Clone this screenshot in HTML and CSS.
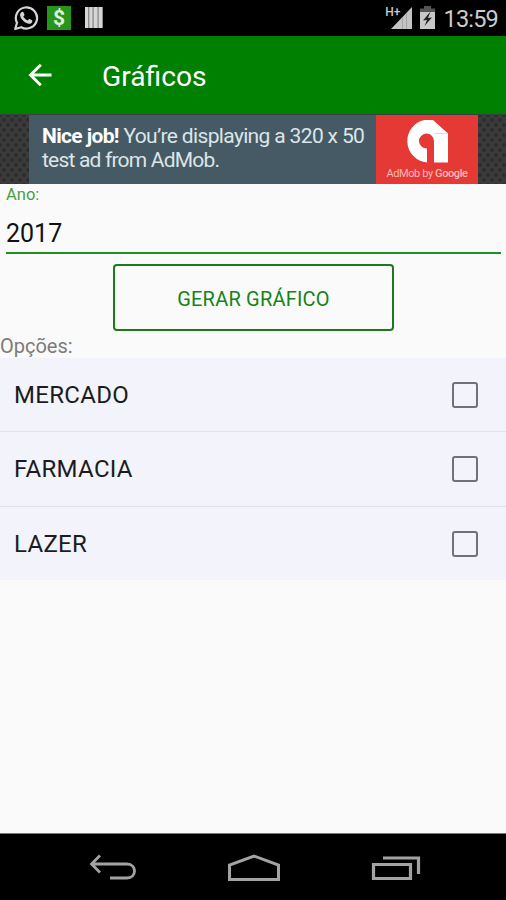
FILE: index.html
```
<!DOCTYPE html>
<html lang="pt-BR">
<head>
    <meta charset="UTF-8">
    <title>Gráficos</title>
    <link rel="stylesheet" href="styles.css">
</head>
<body>
    <div class="screen">
        <div class="status-bar">
            <svg class="icon-whatsapp" width="26" height="26" viewBox="0 0 26 26">
                <path d="M2.2 24 L4 17.8 A10.6 10.6 0 1 1 8.2 22.2 Z" fill="none" stroke="#d4d4d4" stroke-width="2.2" stroke-linejoin="round"/>
                <path d="M8.6 7 C9.4 6.6 10.2 6.6 10.5 7.3 L11.5 9.7 C11.6 10.4 10.7 11 10.3 11.6 C11.3 13.4 12.7 14.7 14.7 15.5 C15.4 15 15.9 13.8 16.7 14.1 L19 15.3 C19.7 15.8 19.2 17.5 18.3 18.2 C15.8 19.8 12.4 18 10.2 15.8 C7.6 13.3 5.5 9.2 8.6 7 Z" fill="#d4d4d4"/>
            </svg>
            <span class="icon-money">$</span>
            <svg class="icon-bars" width="18" height="21" viewBox="0 0 18 21">
                <path d="M0 0H18V21H0Z" fill="#8c8c8c"/>
                <path d="M0 0H3V21H0Z M4.4 0H7.4V21H4.4Z M8.8 0H12.4V21H8.8Z M13.8 0H17V21H13.8Z" fill="#d6d6d6"/>
            </svg>
            <span class="network">H+</span>
            <svg class="icon-signal" width="21" height="22" viewBox="0 0 21 22">
                <path d="M21 0V22H0Z" fill="#c4c4c4"/>
                <path d="M11.5 10V22 M15.5 6V22" stroke="#a4a4a4" stroke-width="1"/>
            </svg>
            <svg class="icon-battery" width="15" height="23" viewBox="0 0 15 23">
                <path d="M4 0H11V2.5H15V7H0V2.5H4Z" fill="#555"/>
                <path d="M0 6H15V23H0Z" fill="#c8c8c8"/>
                <path d="M10.5 5.5L3 14.5L7 14L4.5 20L12 11.5L8 12Z" fill="#222"/>
            </svg>
            <span class="clock">13:59</span>
        </div>

        <div class="toolbar">
            <svg class="icon-back" width="24" height="24" viewBox="0 0 24 24">
                <path d="M23.5 12H2.5 M12.8 1.7L2.5 12L12.8 22.3" fill="none" stroke="#fff" stroke-width="2.9"/>
            </svg>
            <h1>Gráficos</h1>
        </div>

        <div class="ad">
            <div class="ad-text">
                <div class="ad-line"><b>Nice job!</b> You’re displaying a 320 x 50</div>
                <div class="ad-line ad-line-second">test ad from AdMob.</div>
            </div>
            <div class="ad-logo">
                <svg width="44" height="44" viewBox="0 0 44 44">
                    <path d="M22 43.5A21.5 21.5 0 0 1 19.5 1H28L43 14.5V43.5H29V22A7.5 7.5 0 1 0 22 29.5Z" fill="#fff"/>
                    <path d="M29 14.5H43" stroke="#e4dada" stroke-width="1"/>
                </svg>
                <span>AdMob by <b>Google</b></span>
            </div>
        </div>

        <div class="field">
            <label>Ano:</label>
            <div class="field-value">2017</div>
        </div>

        <button class="generate">GERAR GRÁFICO</button>

        <div class="options-label">Opções:</div>
        <div class="options">
            <div class="option"><span>MERCADO</span><i class="checkbox"></i></div>
            <div class="option"><span>FARMACIA</span><i class="checkbox"></i></div>
            <div class="option"><span>LAZER</span><i class="checkbox"></i></div>
        </div>

        <div class="nav-bar">
            <svg width="48" height="28" viewBox="0 0 48 28">
                <path d="M2 10H38C48 10 48 24 38 24H21 M11 1.5L2.5 10L11 18.5" fill="none" stroke="#a3a3a3" stroke-width="2.8"/>
            </svg>
            <svg width="54" height="28" viewBox="0 0 54 28">
                <path d="M2.5 25.5V11L27 2L51.5 11V25.5Z" fill="none" stroke="#a3a3a3" stroke-width="3"/>
            </svg>
            <svg width="50" height="28" viewBox="0 0 50 28">
                <path d="M2.5 10.5H39.5V24.5H2.5Z M12 4H47.5V20" fill="none" stroke="#a3a3a3" stroke-width="3.2"/>
            </svg>
        </div>
    </div>
</body>
</html>
```
FILE: styles.css
```
:root {
    --green: #008000;
    --page-bg: #fafafa;
    --row-bg: #f2f3fb;
}

* {
    box-sizing: border-box;
}

body {
    margin: 0;
    font-family: Roboto, "Liberation Sans", sans-serif;
    background-color: var(--page-bg);
}

.screen {
    width: 506px;
    height: 900px;
    display: flex;
    flex-direction: column;
    overflow: hidden;
}

.status-bar {
    height: 36px;
    flex: none;
    display: flex;
    align-items: flex-start;
    padding: 0 8px 0 13px;
    background-color: #000;
    color: #cbcbcb;
}

.icon-whatsapp {
    margin-top: 5px;
}

.icon-money {
    width: 24px;
    height: 24px;
    margin: 6px 0 0 8px;
    background-color: #25951b;
    color: #e0eedc;
    font-size: 21px;
    font-weight: 700;
    line-height: 25px;
    text-align: center;
}

.icon-bars {
    margin: 7px 0 0 14px;
}

.network {
    margin: 5px -9px 0 auto;
    font-size: 12px;
    font-weight: 500;
    line-height: 14px;
}

.icon-signal {
    margin-top: 7px;
}

.icon-battery {
    margin: 6px 0 0 8px;
}

.clock {
    margin: 0 0 0 8px;
    font-size: 23.5px;
    letter-spacing: -0.8px;
    line-height: 38px;
}

.toolbar {
    height: 78px;
    flex: none;
    display: flex;
    align-items: center;
    padding-left: 28px;
    background-color: var(--green);
    color: #fff;
}

.toolbar h1 {
    margin: 2px 0 0 50px;
    font-size: 28.2px;
    font-weight: 400;
}

.ad {
    height: 70px;
    flex: none;
    display: flex;
    padding: 0 28px 0 29px;
    background-color: #3b3b3b;
    background-image: radial-gradient(circle, #2d2d2d 1.5px, transparent 2.5px), radial-gradient(circle, #2d2d2d 1.5px, transparent 2.5px);
    background-size: 8px 10px;
    background-position: 0 0, 4px 5px;
    border-top: 1px solid #34443d;
}

.ad-text {
    flex: 1;
    padding: 9px 0 0 13px;
    background-color: #455a64;
    color: #dce5e8;
    font-size: 21px;
    letter-spacing: -0.65px;
    line-height: 24px;
    white-space: nowrap;
}

.ad-line-second {
    letter-spacing: -0.8px;
}

.ad-line b {
    color: #fff;
}

.ad-logo {
    width: 102px;
    flex: none;
    display: flex;
    flex-direction: column;
    align-items: center;
    padding-top: 4px;
    background-color: #e53935;
}

.ad-logo span {
    color: #f8b8b5;
    font-size: 11px;
    letter-spacing: -0.4px;
    line-height: 13px;
    margin-top: 4px;
    white-space: nowrap;
}

.ad-logo b {
    font-weight: 500;
}

.field {
    margin: 0 5px 0 6px;
    height: 70px;
    border-bottom: 2px solid #1f8f1f;
}

.field label {
    display: block;
    color: #44a044;
    font-size: 16.5px;
    line-height: 22px;
}

.field-value {
    margin-top: 10px;
    color: #111;
    font-size: 25px;
    line-height: 36px;
}

.generate {
    width: 281px;
    height: 67px;
    flex: none;
    align-self: center;
    margin: 10px 0 0 1px;
    padding-top: 3px;
    border: 2px solid #197b19;
    border-radius: 4px;
    background-color: var(--page-bg);
    color: #158415;
    font-family: inherit;
    font-size: 20px;
    letter-spacing: 0.2px;
}

.options-label {
    margin-top: 3px;
    height: 24px;
    color: #7b7b7b;
    font-size: 20px;
    line-height: 24px;
}

.option {
    height: 75px;
    display: flex;
    align-items: center;
    justify-content: space-between;
    padding: 0 28px 0 14px;
    background-color: var(--row-bg);
    border-bottom: 1px solid #dfe3eb;
    color: #1c1c20;
    font-size: 24px;
    letter-spacing: 0.3px;
}

.option:first-child {
    height: 74px;
}

.option:last-child {
    height: 73px;
    border-bottom: none;
}

.checkbox {
    width: 26px;
    height: 26px;
    border: 2.5px solid #717176;
    border-radius: 3px;
}

.nav-bar {
    height: 67px;
    flex: none;
    margin-top: auto;
    display: flex;
    justify-content: space-between;
    padding: 20px 85px 0 89px;
    background-color: #000;
    border-top: 1px solid #777;
}
```
